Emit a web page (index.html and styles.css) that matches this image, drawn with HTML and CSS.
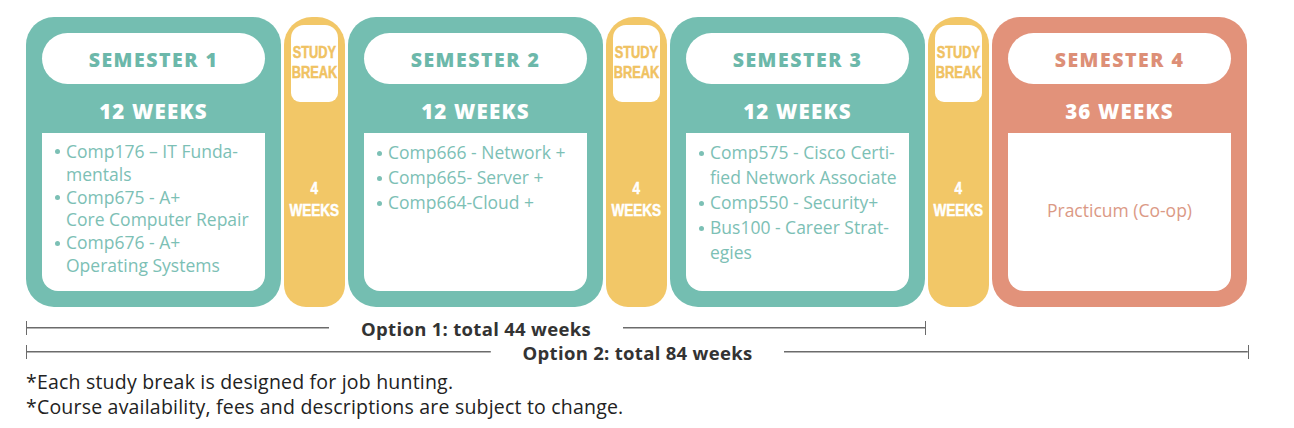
FILE: index.html
```html
<!DOCTYPE html>
<html lang="en">
<head>
<meta charset="utf-8">
<title>Program timeline</title>
<link rel="stylesheet" href="styles.css">
</head>
<body>
<div class="page">
  <div class="row">
    <section class="sem teal">
      <div class="pill">SEMESTER 1</div>
      <div class="weeks">12 WEEKS</div>
      <div class="box">
        <ul class="courses tight">
          <li>Comp176 – IT Funda-<br>mentals</li>
          <li>Comp675 - A+<br>Core Computer Repair</li>
          <li>Comp676 - A+<br>Operating Systems</li>
        </ul>
      </div>
    </section>
    <section class="break">
      <div class="break-label"><span class="narrow">STUDY<br>BREAK</span></div>
      <div class="break-weeks"><span class="narrow">4<br>WEEKS</span></div>
    </section>
    <section class="sem teal">
      <div class="pill">SEMESTER 2</div>
      <div class="weeks">12 WEEKS</div>
      <div class="box">
        <ul class="courses">
          <li>Comp666 - Network +</li>
          <li>Comp665- Server +</li>
          <li>Comp664-Cloud +</li>
        </ul>
      </div>
    </section>
    <section class="break">
      <div class="break-label"><span class="narrow">STUDY<br>BREAK</span></div>
      <div class="break-weeks"><span class="narrow">4<br>WEEKS</span></div>
    </section>
    <section class="sem teal">
      <div class="pill">SEMESTER 3</div>
      <div class="weeks">12 WEEKS</div>
      <div class="box">
        <ul class="courses">
          <li>Comp575 - Cisco Certi-<br>fied Network Associate</li>
          <li>Comp550 - Security+</li>
          <li>Bus100 - Career Strat-<br>egies</li>
        </ul>
      </div>
    </section>
    <section class="break">
      <div class="break-label"><span class="narrow">STUDY<br>BREAK</span></div>
      <div class="break-weeks"><span class="narrow">4<br>WEEKS</span></div>
    </section>
    <section class="sem salmon">
      <div class="pill">SEMESTER 4</div>
      <div class="weeks">36 WEEKS</div>
      <div class="box center">
        <p class="practicum">Practicum (Co-op)</p>
      </div>
    </section>
  </div>

  <div class="span span-1">
    <span class="seg start"></span>
    <span class="span-label">Option 1: total 44 weeks</span>
    <span class="seg end"></span>
  </div>
  <div class="span span-2">
    <span class="seg start"></span>
    <span class="span-label">Option 2: total 84 weeks</span>
    <span class="seg end"></span>
  </div>

  <p class="note">*Each study break is designed for job hunting.</p>
  <p class="note">*Course availability, fees and descriptions are subject to change.</p>
</div>
</body>
</html>
```

FILE: styles.css
```css
* { box-sizing: border-box; }

body {
  margin: 0;
  background: #ffffff;
  font-family: "Open Sans", Lato, "Liberation Sans", sans-serif;
}

.page {
  padding: 17px 0 0 26px;
}

.row {
  display: flex;
  gap: 3px;
  height: 290px;
}

.sem {
  width: 255px;
  border-radius: 28px;
  padding: 16px 16px 16px;
  display: flex;
  flex-direction: column;
}

.teal { background: #74beb1; color: #6cb8aa; }
.salmon { background: #e2927a; color: #dd8f77; }

.pill {
  height: 51px;
  border-radius: 26px;
  background: #ffffff;
  display: flex;
  align-items: center;
  justify-content: center;
  font-weight: 800;
  font-size: 19.5px;
  letter-spacing: 1.5px;
  padding-top: 2px;
}

.weeks {
  height: 49px;
  display: flex;
  align-items: center;
  justify-content: center;
  color: #ffffff;
  font-weight: 800;
  font-size: 20.5px;
  letter-spacing: 1.2px;
  padding-top: 4px;
}

.box {
  flex: 1;
  background: #ffffff;
  border-radius: 0 0 16px 16px;
  padding: 7px 0 0 13px;
}

.box.center {
  display: flex;
  align-items: center;
  justify-content: center;
  padding: 0 0 4px 0;
}

.courses {
  list-style: none;
  margin: 0;
  padding: 0;
  font-size: 17.5px;
  line-height: 25px;
  color: #7cc0b5;
}

.courses.tight { line-height: 22.8px; }

.courses li {
  position: relative;
  padding-left: 11px;
}

.courses li::before {
  content: "";
  position: absolute;
  left: 0;
  top: calc(0.5lh - 2px);
  width: 5px;
  height: 5px;
  border-radius: 50%;
  background: #7cc0b5;
}

.practicum {
  margin: 0;
  font-size: 17.5px;
  color: #db9985;
}

.break {
  width: 61px;
  background: #f2c767;
  border-radius: 28px 28px 22px 22px;
  padding: 8px 7px;
  display: flex;
  flex-direction: column;
}

.narrow {
  display: inline-block;
  white-space: nowrap;
  transform: scaleX(0.8);
  font-family: "Liberation Sans", Arial, sans-serif;
  font-weight: 700;
  font-size: 16px;
  line-height: 20px;
  -webkit-text-stroke: 0.5px currentColor;
}

.break-label {
  height: 77px;
  background: #ffffff;
  border-radius: 13px 13px 9px 9px;
  display: flex;
  justify-content: center;
  align-items: flex-start;
  text-align: center;
  color: #f0c262;
  padding-top: 18px;
}

.break-weeks {
  flex: 1;
  display: flex;
  align-items: center;
  justify-content: center;
  text-align: center;
  color: #ffffff;
  padding-bottom: 4px;
}

.break-weeks .narrow {
  line-height: 22px;
  font-size: 16.5px;
  transform: scaleX(0.82);
}

.span {
  display: flex;
  align-items: center;
  gap: 32px;
  height: 22px;
  color: #333333;
  font-weight: 700;
  font-size: 18.5px;
  letter-spacing: 0.3px;
}

.span-1 { width: 900px; margin-top: 10px; }
.span-2 { width: 1223px; margin-top: 2px; }

.seg {
  flex: 1;
  height: 14px;
  background: linear-gradient(#6b6b6b, #6b6b6b) center / 100% 1.5px no-repeat;
}

.seg.start { border-left: 1.5px solid #6b6b6b; }
.seg.end { border-right: 1.5px solid #6b6b6b; }

.span-label {
  white-space: nowrap;
}

.note {
  margin: 0;
  font-size: 19.5px;
  letter-spacing: 0.2px;
  line-height: 25px;
  color: #222222;
}

.note:first-of-type { margin-top: 6px; }
```
